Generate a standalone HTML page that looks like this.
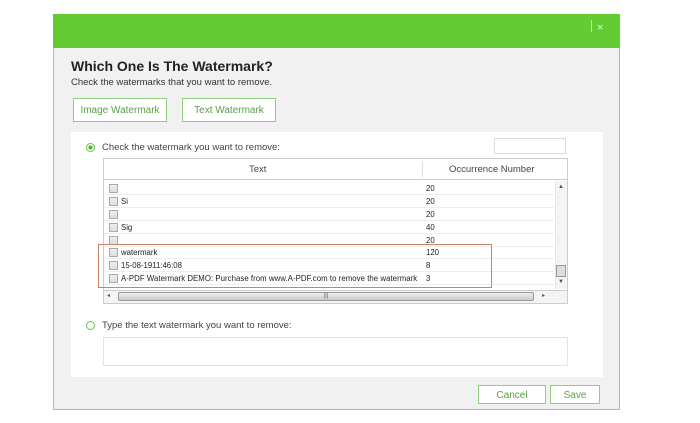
<!DOCTYPE html>
<html><head><style>
*{margin:0;padding:0;box-sizing:border-box}
body{width:700px;height:423px;background:#fff;font-family:"Liberation Sans",sans-serif;position:relative;overflow:hidden}
.a{position:absolute}
.dlg{left:53px;top:14px;width:567px;height:396px;border:1px solid #8fd870;background:#f1f1f1}
.hdr{left:53px;top:14px;width:567px;height:34px;background:#63cc33}
.btn{border:1px solid #8fcf80;background:#fff;color:#5a9e4a;font-size:10px;text-align:center}
.row{position:absolute;left:0;width:450px;height:13px;font-size:7.8px;color:#222;border-bottom:1px solid #eee}
.cb{position:absolute;left:5px;top:2px;width:9px;height:9px;border:1px solid #aaa;background:linear-gradient(#eee,#ddd)}
.t{position:absolute;left:17px;top:2px;white-space:nowrap}
.n{position:absolute;left:322px;top:2px}
</style></head><body>
<div class="a dlg"></div>
<div class="a hdr"></div>
<div class="a" style="left:591px;top:20px;width:1px;height:12px;background:#bfeaa8"></div>
<div class="a" style="left:597px;top:22px;color:#e8f8e0;font-size:11px">×</div>
<div class="a" style="left:71px;top:58px;font-size:14px;font-weight:bold;color:#222">Which One Is The Watermark?</div>
<div class="a" style="left:71px;top:77px;font-size:9.5px;color:#333">Check the watermarks that you want to remove.</div>
<div class="a btn" style="left:73px;top:98px;width:94px;height:24px;line-height:24px">Image Watermark</div>
<div class="a btn" style="left:182px;top:98px;width:94px;height:24px;line-height:24px">Text Watermark</div>
<div class="a" style="left:71px;top:132px;width:532px;height:245px;background:#fff"></div>
<div class="a" style="left:86px;top:143px;width:9px;height:9px;border:1px solid #6cc24a;border-radius:50%;background:radial-gradient(#4caf30 40%,#fff 45%)"></div>
<div class="a" style="left:102px;top:142px;font-size:9.5px;color:#444">Check the watermark you want to remove:</div>
<div class="a" style="left:494px;top:138px;width:72px;height:16px;border:1px solid #ddd"></div>
<div class="a" style="left:103px;top:158px;width:465px;height:146px;border:1px solid #ccc"></div>
<div class="a" style="left:104px;top:159px;width:463px;height:21px;border-bottom:1px solid #ccc;font-size:9.5px;color:#444">
<span class="a" style="left:145px;top:5px">Text</span>
<div class="a" style="left:318px;top:2px;width:1px;height:16px;background:#ddd"></div>
<span class="a" style="left:345px;top:5px">Occurrence Number</span></div>
<div class="a" style="left:104px;top:182px;width:450px;height:106px">
<div class="row" style="top:0"><div class="cb"></div><span class="n">20</span></div>
<div class="row" style="top:13px"><div class="cb"></div><span class="t">Si</span><span class="n">20</span></div>
<div class="row" style="top:26px"><div class="cb"></div><span class="n">20</span></div>
<div class="row" style="top:39px"><div class="cb"></div><span class="t">Sig</span><span class="n">40</span></div>
<div class="row" style="top:52px"><div class="cb"></div><span class="n">20</span></div>
<div class="row" style="top:64px"><div class="cb"></div><span class="t">watermark</span><span class="n">120</span></div>
<div class="row" style="top:77px"><div class="cb"></div><span class="t">15-08-1911:46:08</span><span class="n">8</span></div>
<div class="row" style="top:90px"><div class="cb"></div><span class="t" style="letter-spacing:0.05px">A-PDF Watermark DEMO: Purchase from www.A-PDF.com to remove the watermark</span><span class="n">3</span></div>
</div>
<div class="a" style="left:555px;top:181px;width:12px;height:108px;background:#f4f4f4;border-left:1px solid #e4e4e4"></div>
<div class="a" style="left:558px;top:184px;font-size:6px;color:#555">▲</div>
<div class="a" style="left:558px;top:279px;font-size:6px;color:#555">▼</div>
<div class="a" style="left:556px;top:265px;width:10px;height:12px;border:1px solid #999;background:#ddd"></div>
<div class="a" style="left:104px;top:290px;width:463px;height:13px;background:#f4f4f4;border-top:1px solid #ccc"></div>
<div class="a" style="left:118px;top:292px;width:416px;height:9px;border:1px solid #999;background:linear-gradient(#eee,#ccc);border-radius:2px;font-size:6px;text-align:center;color:#666">|||</div>
<div class="a" style="left:107px;top:292px;font-size:6px;color:#555">◂</div>
<div class="a" style="left:542px;top:292px;font-size:6px;color:#555">▸</div>
<div class="a" style="left:98px;top:244px;width:394px;height:44px;border:1px solid #c8836a"></div>
<div class="a" style="left:86px;top:321px;width:9px;height:9px;border:1px solid #6cc24a;border-radius:50%"></div>
<div class="a" style="left:102px;top:320px;font-size:9.5px;color:#444">Type the text watermark you want to remove:</div>
<div class="a" style="left:103px;top:337px;width:465px;height:29px;border:1px solid #e4e4e4"></div>
<div class="a btn" style="left:478px;top:385px;width:68px;height:19px;line-height:19px">Cancel</div>
<div class="a btn" style="left:550px;top:385px;width:50px;height:19px;line-height:19px">Save</div>
</body></html>
